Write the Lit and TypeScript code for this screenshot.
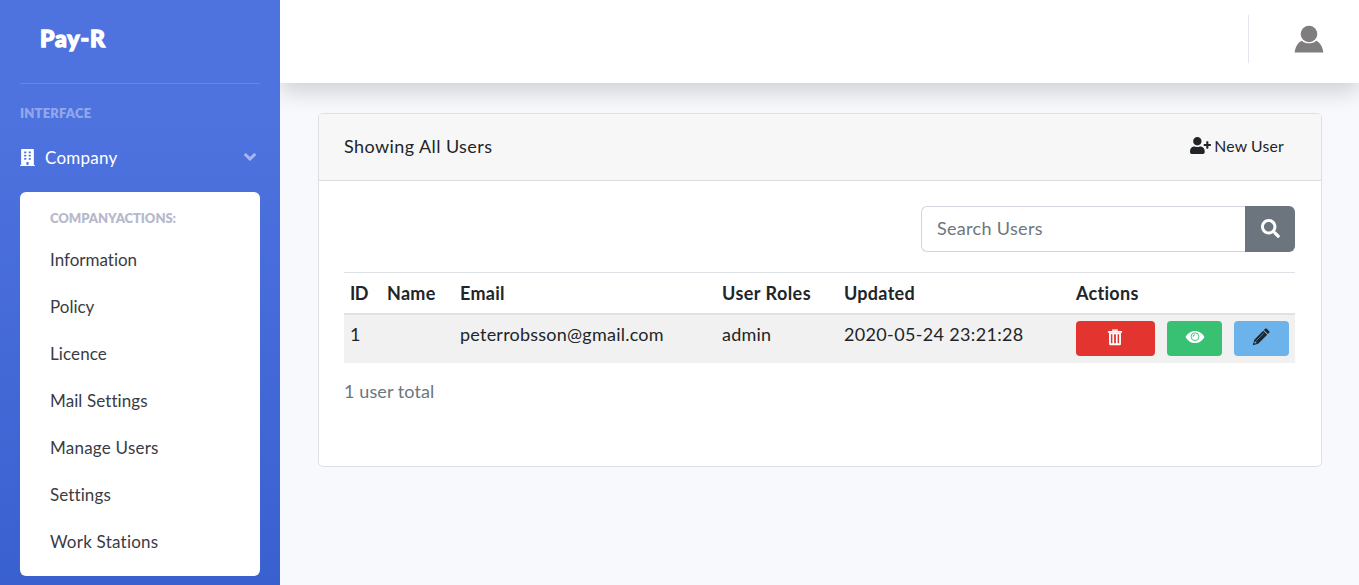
import { LitElement, html, css, svg } from "lit";
import { customElement } from "lit/decorators.js";

const LINKS = [
  { label: "Information", cls: "plain" },
  { label: "Policy", cls: "plain" },
  { label: "Licence", cls: "snug" },
  { label: "Mail Settings", cls: "snug" },
  { label: "Manage Users", cls: "wide" },
  { label: "Settings", cls: "snug" },
  { label: "Work Stations", cls: "wide" },
];

const windows = [];
for (let r = 0; r < 3; r++)
  for (let c = 0; c < 2; c++)
    windows.push(svg`<rect x=${124 + c * 136} y=${76 + r * 96} width="64" height="54" rx="10" fill="#4c71dd"/>`);

const buildingIcon = html`<svg class="building" viewBox="0 0 448 512"><path fill="#fff" d="M436 480h-20V24c0-13.300-10.700-24-24-24H56C42.700 0 32 10.700 32 24v456H12c-6.600 0-12 5.400-12 12v20h448v-20c0-6.600-5.400-12-12-12z"/>${windows}<rect x="192" y="392" width="64" height="88" fill="#4c71dd"/></svg>`;

const chevronIcon = html`<svg class="chevron" viewBox="0 0 320 512"><path fill="currentColor" d="M143 352.300L7 216.300c-9.400-9.400-9.400-24.600 0-33.900l22.600-22.600c9.400-9.400 24.600-9.400 33.900 0l96.400 96.400 96.400-96.400c9.400-9.400 24.600-9.400 33.900 0l22.600 22.600c9.400 9.400 9.400 24.600 0 33.900l-136 136c-9.200 9.400-24.400 9.400-33.800 0z"/></svg>`;

const userPlusIcon = html`<svg class="user-plus" viewBox="0 0 640 512"><path fill="currentColor" d="M624 208h-64v-64c0-8.800-7.200-16-16-16h-32c-8.800 0-16 7.200-16 16v64h-64c-8.800 0-16 7.200-16 16v32c0 8.800 7.200 16 16 16h64v64c0 8.800 7.200 16 16 16h32c8.800 0 16-7.200 16-16v-64h64c8.800 0 16-7.200 16-16v-32c0-8.800-7.200-16-16-16zm-400 48c70.700 0 128-57.300 128-128S294.700 0 224 0 96 57.300 96 128s57.300 128 128 128zm89.600 32h-16.700c-22.200 10.200-46.900 16-72.900 16s-50.600-5.800-72.900-16h-16.700C60.200 288 0 348.200 0 422.400V464c0 26.500 21.500 48 48 48h352c26.500 0 48-21.500 48-48v-41.600c0-74.200-60.200-134.400-134.400-134.400z"/></svg>`;

const searchIcon = html`<svg class="search-icon" viewBox="0 0 512 512"><path fill="currentColor" d="M505 442.700L405.300 343c-4.500-4.500-10.600-7-17-7H372c27.600-35.300 44-79.700 44-128C416 93.100 322.900 0 208 0S0 93.100 0 208s93.100 208 208 208c48.300 0 92.700-16.400 128-44v16.300c0 6.400 2.500 12.500 7 17l99.700 99.700c9.400 9.400 24.600 9.400 33.900 0l28.300-28.300c9.400-9.400 9.400-24.600.1-34zM208 336c-70.700 0-128-57.200-128-128 0-70.700 57.200-128 128-128 70.700 0 128 57.200 128 128 0 70.700-57.200 128-128 128z"/></svg>`;

const trashIcon = html`<svg class="trash" viewBox="0 0 16 17"><path fill="#fff" opacity=".8" d="M5 2.500V1.300C5 .6 5.500.2 6.100.2h3.800c.6 0 1.100.4 1.100 1.100v1.200z"/><path fill="#fff" d="M1.600 1.900h12.800c.4 0 .7.300.7.700v1.200H.9V2.600c0-.4.300-.7.700-.7z"/><path fill="#fff" fill-rule="evenodd" d="M2 3.500h12V15c0 .7-.5 1.200-1.200 1.200H3.200C2.500 16.200 2 15.700 2 15zm1.900 1.700v9.100h1.500V5.200zm3.200 0v9.100h1.800V5.200zm3.500 0v9.100h1.500V5.200z"/></svg>`;

const eyeIcon = html`<svg class="eye" viewBox="0 0 20 14"><path fill="#fff" d="M.5 7C2.600 3.300 6 .9 10 .9S17.400 3.300 19.500 7c-2.100 3.700-5.500 6.100-9.500 6.100S2.600 10.700.5 7z"/><circle cx="10" cy="6.700" r="3.900" fill="none" stroke="#38c172" stroke-width=".9"/><path d="M8.100 6.700A1.900 1.900 0 0 1 10 4.800" fill="none" stroke="#38c172" stroke-width="1"/></svg>`;

const pencilIcon = html`<svg class="pencil" viewBox="0 0 18 18"><path fill="#212529" d="M11.900 2.100l1.300-1.300c.5-.5 1.100-.5 1.600 0l2.400 2.400c.5.500.5 1.100 0 1.600l-1.300 1.300zM11.200 2.800l4 4-9 9L.8 17.300l1.500-5.600z"/><path stroke="#6cb2eb" stroke-width=".6" d="M4.200 12.800l7.500-7.500"/><path fill="#6cb2eb" d="M2.900 13.100l2 2-1.800.5-.7-.7z"/></svg>`;

const avatarIcon = html`<svg class="avatar" viewBox="0 0 30 28"><circle cx="15" cy="9" r="8.300" fill="#7f7d7e"/><path fill="#7f7d7e" d="M.7 27.500C1.200 21.800 4 17.600 7.700 15.700c4 3.500 10.600 3.500 14.600 0 3.700 1.900 6.500 6.100 7 11.800z"/></svg>`;

@customElement("app-root")
export class AppRoot extends LitElement {
  static styles = css`
    :host { display: block; font-family: Lato, "Noto Sans", sans-serif; font-size: 18px; line-height: 27px; color: #212529; font-variant-ligatures: none; }
    * { box-sizing: border-box; }
    svg { display: block; flex: none; }
    .page { display: flex; height: 585px; overflow: hidden; background: #f8f9fc; }
    .sidebar { width: 280px; flex: none; padding: 0 20px; background: linear-gradient(180deg, #4e73df 115px, #224abe 1150px); color: #fff; }
    .brand { height: 83px; padding: 25px 0 0 20px; font-size: 23px; line-height: 27px; font-weight: 900; letter-spacing: .9px; -webkit-text-stroke: 1.300px #fff; }
    .divider { height: 1px; background: rgba(255, 255, 255, .15); }
    .heading { height: 19px; margin-top: 20px; font-size: 13px; line-height: 19px; font-weight: 800; letter-spacing: .2px; color: rgba(255, 255, 255, .4); }
    .company { height: 27px; margin-top: 21px; display: flex; align-items: center; }
    .building { width: 15px; height: 17px; }
    .company-label { margin-left: 10px; flex: 1; font-size: 17px; letter-spacing: .25px; }
    .chevron { width: 12px; height: 20px; margin: -2px 4px 0 0; color: rgba(255, 255, 255, .5); }
    .menu { margin-top: 21px; height: 384px; padding: 16px 30px; background: #fff; border-radius: 6px; }
    .menu-title { height: 20px; margin-bottom: 9px; font-size: 13px; line-height: 20px; font-weight: 800; letter-spacing: -.050px; color: #b7b9cc; }
    .link { height: 47px; line-height: 46px; font-size: 17px; color: #3a3b45; }
    .snug { letter-spacing: .1px; }
    .wide { letter-spacing: .23px; }
    .content { flex: 1; min-width: 0; overflow: hidden; }
    .topbar { height: 83px; background: #fff; box-shadow: 0 10px 20px rgba(0, 0, 0, .15); display: flex; justify-content: flex-end; align-items: flex-start; padding: 15px 35px 0 0; }
    .bar { width: 1px; height: 48px; background: #e3e6f0; margin-right: 45px; }
    .avatar { width: 30px; height: 28px; margin-top: 9.500px; }
    .card { margin: 30px 37px 0 38px; height: 354px; border: 1px solid #dfe0e3; border-radius: 5px; background: #fff; overflow: hidden; }
    .card-head { height: 67px; padding: 0 37px 2px 25px; display: flex; align-items: center; justify-content: space-between; background: #f7f7f7; border-bottom: 1px solid #dcdcdc; }
    .title { letter-spacing: .42px; }
    .new-user { display: flex; align-items: center; gap: 3px; font-size: 15.750px; letter-spacing: .2px; margin-top: -2px; }
    .user-plus { width: 21px; height: 17px; }
    .card-body { padding: 25px 26px 0 25px; }
    .search { display: flex; width: 374px; height: 46px; margin-left: auto; }
    .field { flex: 1; border: 1px solid #d1d3e2; border-right: 0; border-radius: 6px 0 0 6px; padding-left: 15px; line-height: 42px; letter-spacing: .32px; color: #6e757e; }
    .search-btn { width: 50px; display: grid; place-items: center; background: #6c757d; color: #fff; border-radius: 0 6px 6px 0; }
    .search-icon { width: 19px; height: 19px; margin-top: -2px; }
    .row { display: grid; grid-template-columns: 37px 73px 262px 122px 232px 91px 67px 67px; padding-left: 6px; margin-right: -6px; }
    .table { margin-top: 20px; border-top: 1px solid #dee2e6; overflow: hidden; }
    .thead { height: 42px; line-height: 40px; font-weight: 700; letter-spacing: .28px; border-bottom: 2px solid #dee2e6; }
    .id-head { letter-spacing: -.5px; }
    .roles-head { letter-spacing: .45px; }
    .tbody { height: 48px; padding-top: 6px; background: #f1f1f1; }
    .email { letter-spacing: .23px; }
    .role { letter-spacing: .2px; }
    .date { letter-spacing: .34px; }
    .btn { height: 35px; border-radius: 4px; display: grid; place-items: center; margin-right: 12px; }
    .red { background: #e3342f; }
    .green { background: #38c172; }
    .blue { background: #6cb2eb; }
    .trash { width: 16px; height: 17px; margin: -3px 1px 0 0; }
    .eye { width: 20px; height: 14px; margin-top: -3px; }
    .pencil { width: 18px; height: 18px; margin: -3px 1px 0 0; }
    .total { margin-top: 15px; letter-spacing: .1px; color: #6c757d; }
  `;

  render() {
    return html`<div class="page">
      <nav class="sidebar">
        <div class="brand"><span>Pay-R</span></div>
        <div class="divider"></div>
        <div class="heading"><span>INTERFACE</span></div>
        <div class="company">${buildingIcon}<span class="company-label">Company</span>${chevronIcon}</div>
        <div class="menu">
          <div class="menu-title"><span>COMPANYACTIONS:</span></div>
          ${LINKS.map((l) => html`<div class="link"><span class=${l.cls}>${l.label}</span></div>`)}
        </div>
      </nav>
      <main class="content">
        <header class="topbar"><div class="bar"></div>${avatarIcon}</header>
        <section class="card">
          <div class="card-head"><span class="title">Showing All Users</span><div class="new-user">${userPlusIcon}<span>New User</span></div></div>
          <div class="card-body">
            <div class="search"><div class="field"><span>Search Users</span></div><div class="search-btn">${searchIcon}</div></div>
            <div class="table">
              <div class="row thead"><span class="id-head">ID</span><span>Name</span><span>Email</span><span class="roles-head">User Roles</span><span>Updated</span><span>Actions</span></div>
              <div class="row tbody"><span>1</span><span></span><span class="email">peterrobsson@gmail.com</span><span class="role">admin</span><span class="date">2020-05-24 23:21:28</span>
                <div class="btn red">${trashIcon}</div><div class="btn green">${eyeIcon}</div><div class="btn blue">${pencilIcon}</div></div>
            </div>
            <div class="total"><span>1 user total</span></div>
          </div>
        </section>
      </main>
    </div>`;
  }
}
